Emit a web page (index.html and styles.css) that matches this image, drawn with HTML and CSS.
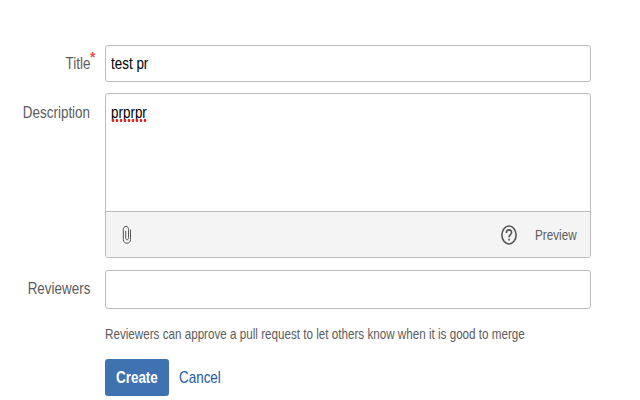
FILE: index.html
```
<!DOCTYPE html>
<html>
	<head>
		<meta charset="utf-8">
		<title>Create pull request</title>
		<link rel="stylesheet" href="styles.css">
	</head>
	<body>
		<form class="pr-form">
			<div class="row">
				<div class="label"><span class="narrow">Title</span><span class="required">*</span></div>
				<div class="field title"><span class="narrow">test pr</span></div>
			</div>
			<div class="row description">
				<div class="label"><span class="narrow">Description</span></div>
				<div class="field editor">
					<div class="text"><span class="narrow">prprpr</span><span class="spelling"></span></div>
					<div class="toolbar">
						<svg class="clip" width="10" height="20" viewBox="0 0 10 20">
							<path d="M8.5 4.5V14.5C8.5 17 7.1 18.2 5 18.2S1.3 17 1.3 14.5V4.5C1.3 2.5 2.4 1.4 4 1.4S6.5 2.6 6.5 4.5V12.7C6.5 14 6 14.7 5.1 14.7S3.7 14 3.7 12.8V6"/>
						</svg>
						<svg class="help" width="16" height="20" viewBox="0 0 16 20">
							<ellipse cx="8" cy="10" rx="7.1" ry="9"/>
							<path d="M5.4 8C5.4 6 6.4 4.9 8 4.9S10.6 6 10.6 7.6C10.6 9.6 8 9.8 8 12.2M8 13.7V15.5"/>
						</svg>
						<span class="narrow preview">Preview</span>
					</div>
				</div>
			</div>
			<div class="row">
				<div class="label"><span class="narrow">Reviewers</span></div>
				<div class="field reviewers"></div>
			</div>
			<div class="hint"><span class="narrow">Reviewers can approve a pull request to let others know when it is good to merge</span></div>
			<div class="buttons">
				<div class="create"><span class="narrow">Create</span></div>
				<a class="cancel"><span class="narrow">Cancel</span></a>
			</div>
		</form>
	</body>
</html>
```
FILE: styles.css
```
html, body {margin:0;padding:0;}
body {
	font-family:"Liberation Sans", Arial, sans-serif;
	font-size:17px;
	line-height:20px;
	color:#5c5c5c;
	background:#fff;
	height:400px;
	overflow:hidden;
}
.pr-form {
	width:591px;
	padding-top:45px;
}
.row {
	display:flex;
	margin-bottom:12px;
}
.row:first-child {
	margin-bottom:11px;
}
/* condensed lettering */
.narrow {
	display:inline-block;
	white-space:nowrap;
	transform:scaleX(0.79);
	transform-origin:left center;
}
.label {
	position:relative;
	box-sizing:border-box;
	width:105px;
	padding:9px 15px 0 0;
	text-align:right;
}
.description .label {
	padding-top:10px;
}
.label .narrow {
	transform-origin:right center;
}
.required {
	position:absolute;
	left:90px;
	top:4px;
	font-size:14px;
	font-weight:bold;
	line-height:16px;
	color:#d9594e;
}
.field {
	box-sizing:border-box;
	width:486px;
	border:1px solid #bbb;
	border-radius:3px;
	background:#fff;
	color:#000;
}
.title {
	height:37px;
	padding:8px 5px;
}
.editor {
	height:165px;
	overflow:hidden;
}
.text {
	position:relative;
	box-sizing:border-box;
	height:117px;
	padding:9px 5px;
}
.spelling {
	position:absolute;
	left:5px;
	top:25px;
	width:36px;
	height:3px;
	background:radial-gradient(circle, #e8231f 1.1px, transparent 1.6px) 0 0 / 4px 3px;
}
.toolbar {
	display:flex;
	align-items:center;
	box-sizing:border-box;
	height:46px;
	padding-left:16px;
	border-top:1px solid #bbb;
	background:#f4f4f4;
	color:#5c5c5c;
	font-size:15px;
}
.toolbar svg {
	fill:none;
	stroke:#555;
}
.clip {
	stroke-width:1;
}
.help {
	margin-left:369px;
	margin-right:18px;
	stroke-width:1.6;
}
.preview {
	transform:scaleX(0.78);
}
.reviewers {
	height:39px;
}
.hint {
	margin:15px 0 15px 105px;
	width:486px;
	font-size:15px;
}
.hint .narrow {
	transform:scaleX(0.777);
}
.buttons {
	display:flex;
	align-items:center;
	margin-left:105px;
}
.create {
	box-sizing:border-box;
	width:64px;
	height:37px;
	padding:9px 0 0 11px;
	border-radius:3px;
	background:#3e72b0;
	color:#fff;
	font-weight:bold;
}
.cancel {
	margin-left:10px;
	color:#2158a6;
}
```
